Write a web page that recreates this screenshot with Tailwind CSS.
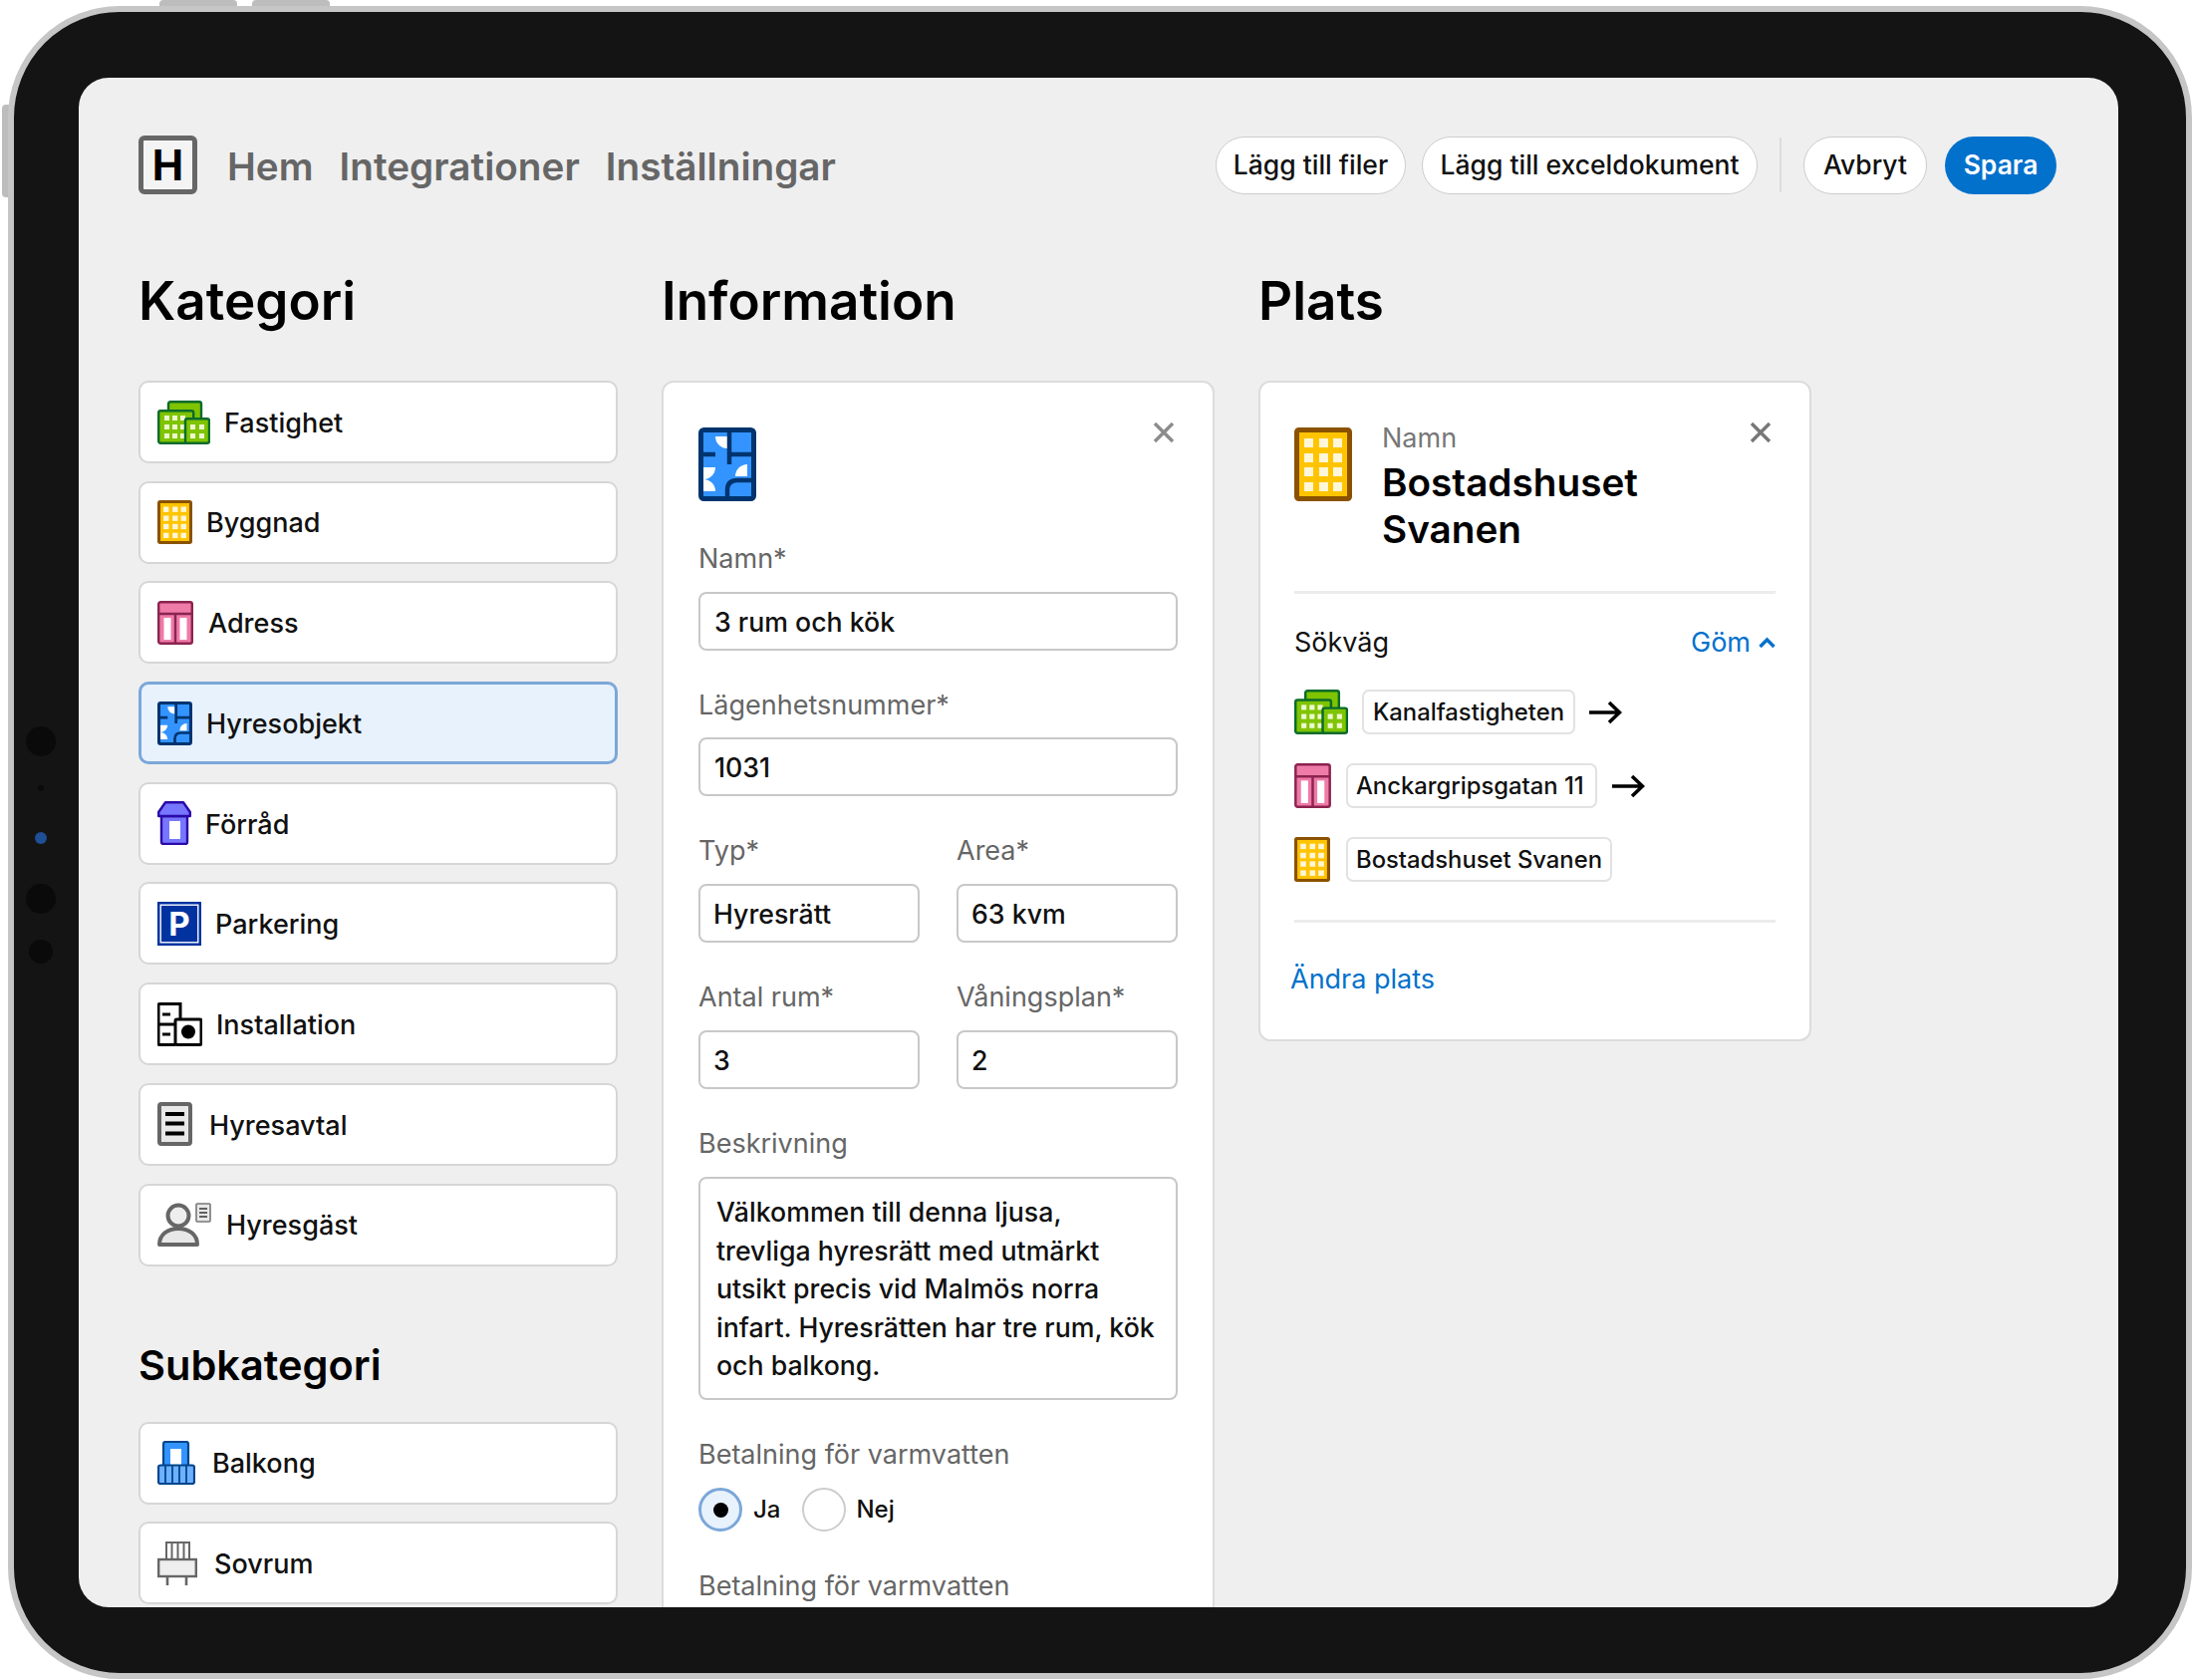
<!DOCTYPE html>
<html lang="sv">
<head>
    <meta charset="UTF-8" />
    <title>Hyresobjekt</title>
    <script src="https://cdn.jsdelivr.net/npm/@tailwindcss/browser@4"></script>
</head>
<body class="bg-white font-['Inter',sans-serif] text-[#111]">
    <!-- ikoner -->
    <svg class="hidden">
        <symbol id="i-fastighet" viewBox="0 0 53 44">
            <rect x="11" y="1.2" width="33" height="30" rx="2" fill="#7fc400" stroke="#0b6b2c" stroke-width="2.4"/>
            <rect x="1.2" y="10.2" width="35" height="32.6" rx="2" fill="#7fc400" stroke="#0b6b2c" stroke-width="2.4"/>
            <g fill="#eef8d0">
                <rect x="7" y="15" width="5" height="5"/><rect x="15" y="15" width="5" height="5"/><rect x="23" y="15" width="5" height="5"/>
                <rect x="7" y="24" width="5" height="5"/><rect x="15" y="24" width="5" height="5"/><rect x="23" y="24" width="5" height="5"/>
                <rect x="7" y="33" width="5" height="5"/><rect x="15" y="33" width="5" height="5"/><rect x="23" y="33" width="5" height="5"/>
            </g>
            <rect x="28" y="18.2" width="24" height="24.6" rx="2" fill="#7fc400" stroke="#0b6b2c" stroke-width="2.4"/>
            <g fill="#eef8d0">
                <rect x="33" y="24" width="5" height="5"/><rect x="42" y="24" width="5" height="5"/>
                <rect x="33" y="33" width="5" height="5"/><rect x="42" y="33" width="5" height="5"/>
            </g>
        </symbol>
        <symbol id="i-byggnad" viewBox="0 0 58 74" preserveAspectRatio="none">
            <rect x="2.5" y="2.5" width="53" height="69" rx="2" fill="#ffc400" stroke="#8a5200" stroke-width="5"/>
            <g fill="#fff6d8">
                <rect x="10" y="11" width="9" height="9"/><rect x="25" y="11" width="9" height="9"/><rect x="39" y="11" width="9" height="9"/>
                <rect x="10" y="26" width="9" height="9"/><rect x="25" y="26" width="9" height="9"/><rect x="39" y="26" width="9" height="9"/>
                <rect x="10" y="40" width="9" height="9"/><rect x="25" y="40" width="9" height="9"/><rect x="39" y="40" width="9" height="9"/>
                <rect x="10" y="55" width="9" height="9"/><rect x="25" y="55" width="9" height="9"/><rect x="39" y="55" width="9" height="9"/>
            </g>
        </symbol>
        <symbol id="i-adress" viewBox="0 0 36 44">
            <rect x="1.2" y="1.2" width="33.6" height="41.6" rx="2" fill="#ee7ba8" stroke="#8c2350" stroke-width="2.4"/>
            <path d="M1 13h34M18 13v30" stroke="#8c2350" stroke-width="2.4"/>
            <rect x="6.5" y="17" width="7" height="22" fill="#fff"/>
            <rect x="22.5" y="17" width="7" height="22" fill="#fff"/>
        </symbol>
        <symbol id="i-hyresobjekt" viewBox="0 0 58 74" preserveAspectRatio="none">
            <rect x="2.5" y="2.5" width="53" height="69" rx="3" fill="#3494ff" stroke="#00346f" stroke-width="5"/>
            <path d="M17 9H29V21A12 12 0 0 1 17 9Z" fill="#fff"/>
            <path d="M49 37V49H37A12 12 0 0 1 49 37Z" fill="#fff"/>
            <path d="M5 40H17A12 12 0 0 1 5 52Z" fill="#fff"/>
            <path d="M5 52A12 12 0 0 1 17 64H5Z" fill="#fff"/>
            <path d="M31 3V37M31 27H55M3 27H17M55 53H39Q29 53 29 63V72" fill="none" stroke="#00346f" stroke-width="4.5"/>
        </symbol>
    </svg>

    <!-- iPad-ram -->
    <div class="relative mt-[6px] ml-[8px] w-[2192px] h-[1679px]">
        <div class="absolute -top-[6px] left-[152px] w-[78px] h-[8px] rounded-t-sm bg-[#bdbdbd]"></div>
        <div class="absolute -top-[6px] left-[245px] w-[78px] h-[8px] rounded-t-sm bg-[#bdbdbd]"></div>
        <div class="absolute -left-[6px] top-[99px] w-[8px] h-[93px] rounded-l-sm bg-[#bdbdbd]"></div>

        <div class="relative h-full rounded-[112px] border-[6px] border-[#c6c6c6] bg-[#141414] pt-[66px] pl-[65px]">
            <!-- kamera -->
            <div class="absolute left-[12px] top-[717px] w-[30px] h-[30px] rounded-full bg-[#0a0a0a]"></div>
            <div class="absolute left-[24px] top-[776px] w-[6px] h-[6px] rounded-full bg-[#0a0a0a]"></div>
            <div class="absolute left-[21px] top-[823px] w-[12px] h-[12px] rounded-full bg-[#1f4f94]"></div>
            <div class="absolute left-[12px] top-[875px] w-[30px] h-[30px] rounded-full bg-[#0a0a0a]"></div>
            <div class="absolute left-[15px] top-[931px] w-[24px] h-[24px] rounded-full bg-[#0a0a0a]"></div>

            <!-- skärm -->
            <div class="w-[2047px] h-[1535px] rounded-[30px] bg-[#efefef] overflow-hidden pl-[60px] pt-[58px]">
                <!-- toppmeny -->
                <header class="flex items-center h-[59px] w-[1925px]">
                    <div class="flex items-center justify-center w-[59px] h-[59px] rounded-[6px] border-[5px] border-[#666] bg-[#f4f4f4] text-[42px] font-bold text-black">H</div>
                    <nav class="flex items-center gap-[26px] ml-[30px] pt-[3px] text-[38.7px] font-semibold text-[#666]">
                        <span>Hem</span>
                        <span>Integrationer</span>
                        <span>Inställningar</span>
                    </nav>
                    <div class="flex items-center ml-auto text-[26.5px] font-medium">
                        <span class="flex items-center justify-center w-[191px] h-[58px] rounded-full border border-[#ccc] bg-white">Lägg till filer</span>
                        <span class="flex items-center justify-center w-[337px] h-[58px] ml-[16px] rounded-full border border-[#ccc] bg-white">Lägg till exceldokument</span>
                        <span class="w-[2px] h-[55px] ml-[22px] mr-[22px] bg-[#dcdcdc]"></span>
                        <span class="flex items-center justify-center w-[124px] h-[58px] rounded-full border border-[#ccc] bg-white">Avbryt</span>
                        <span class="flex items-center justify-center w-[112px] h-[58px] ml-[18px] rounded-full bg-[#0271cc] text-white font-semibold">Spara</span>
                    </div>
                </header>

                <main class="flex gap-[44px] mt-[75px] items-start">
                    <!-- Kategori -->
                    <section class="w-[481px]">
                        <h2 class="h-[64px] mb-[48px] text-[53px] leading-[64px] font-semibold text-black">Kategori</h2>
                        <div class="flex flex-col gap-[17.7px] text-[27px] font-medium">
                            <div class="flex items-center gap-[14px] h-[83px] px-[17px] pt-[3px] rounded-[10px] border-2 border-[#d6d6d6] bg-white">
                                <svg class="w-[53px] h-[44px] -mt-[3px]"><use href="#i-fastighet"/></svg>
                                <span>Fastighet</span>
                            </div>
                            <div class="flex items-center gap-[14px] h-[83px] px-[17px] pt-[3px] rounded-[10px] border-2 border-[#d6d6d6] bg-white">
                                <svg class="w-[35px] h-[44px] -mt-[3px]"><use href="#i-byggnad"/></svg>
                                <span>Byggnad</span>
                            </div>
                            <div class="flex items-center gap-[15px] h-[83px] px-[17px] pt-[3px] rounded-[10px] border-2 border-[#d6d6d6] bg-white">
                                <svg class="w-[36px] h-[44px] -mt-[3px]"><use href="#i-adress"/></svg>
                                <span>Adress</span>
                            </div>
                            <div class="flex items-center gap-[14px] h-[83px] px-[17px] pt-[3px] rounded-[10px] border-[3px] border-[#7ba7d9] bg-[#e8f2fd]">
                                <svg class="w-[35px] h-[44px] -ml-px -mt-[3px]"><use href="#i-hyresobjekt"/></svg>
                                <span>Hyresobjekt</span>
                            </div>
                            <div class="flex items-center gap-[14px] h-[83px] px-[17px] pt-[3px] rounded-[10px] border-2 border-[#d6d6d6] bg-white">
                                <svg class="w-[34px] h-[44px] -mt-[3px]" viewBox="0 0 34 44">
                                    <path d="M4 15V41a2 2 0 0 0 2 2H28a2 2 0 0 0 2-2V15Z" fill="#7676ff" stroke="#2b0aa8" stroke-width="2.4"/>
                                    <path d="M8 1.2H26L32.8 11V15H1.2V11Z" fill="#7676ff" stroke="#2b0aa8" stroke-width="2.4" stroke-linejoin="round"/>
                                    <rect x="12" y="20" width="11" height="18" fill="#fff"/>
                                </svg>
                                <span>Förråd</span>
                            </div>
                            <div class="flex items-center gap-[14px] h-[83px] px-[17px] pt-[3px] rounded-[10px] border-2 border-[#d6d6d6] bg-white">
                                <svg class="w-[44px] h-[44px] -mt-[3px]" viewBox="0 0 44 44">
                                    <rect width="44" height="44" fill="#0033a0"/>
                                    <rect x="3.2" y="3.2" width="37.6" height="37.6" fill="none" stroke="#fff" stroke-width="1.4"/>
                                    <text x="22" y="34" text-anchor="middle" font-family="Inter, sans-serif" font-weight="700" font-size="33" fill="#fff">P</text>
                                </svg>
                                <span>Parkering</span>
                            </div>
                            <div class="flex items-center gap-[14px] h-[83px] px-[17px] pt-[3px] rounded-[10px] border-2 border-[#d6d6d6] bg-white">
                                <svg class="w-[45px] h-[44px] -mt-[3px]" viewBox="0 0 45 44">
                                    <path d="M2 1.5H23V17M2 1.5a1 1 0 0 0-1 1V41.5a1 1 0 0 0 1 1H18M1 22H18" fill="none" stroke="#000" stroke-width="3"/>
                                    <rect x="18" y="17" width="26" height="25.5" rx="1.5" fill="#fff" stroke="#000" stroke-width="3"/>
                                    <circle cx="31" cy="29.5" r="7" fill="#000"/>
                                    <path d="M5 12H13M5 32H13" stroke="#000" stroke-width="3"/>
                                </svg>
                                <span>Installation</span>
                            </div>
                            <div class="flex items-center gap-[17px] h-[83px] px-[17px] pt-[3px] rounded-[10px] border-2 border-[#d6d6d6] bg-white">
                                <svg class="w-[35px] h-[44px] -mt-[3px]" viewBox="0 0 35 44">
                                    <rect x="2" y="2" width="31" height="40" rx="2" fill="#e8e8e8" stroke="#666" stroke-width="4"/>
                                    <path d="M8 12H27M8 21.5H27M8 31.5H27" stroke="#000" stroke-width="4"/>
                                </svg>
                                <span>Hyresavtal</span>
                            </div>
                            <div class="flex items-center gap-[15px] h-[83px] px-[17px] pt-[3px] rounded-[10px] border-2 border-[#d6d6d6] bg-white">
                                <svg class="w-[54px] h-[44px] -mt-[3px]" viewBox="0 0 54 44">
                                    <path d="M2 42C2 32 10 26 21 26S40 32 40 42Z" fill="#e8e8e8" stroke="#666" stroke-width="4" stroke-linejoin="round"/>
                                    <circle cx="21" cy="13" r="10.5" fill="#eee" stroke="#666" stroke-width="4"/>
                                    <rect x="39" y="1" width="14" height="18" rx="1" fill="#e8e8e8" stroke="#777" stroke-width="1.6"/>
                                    <path d="M42 6H50M42 10H50M42 14H50" stroke="#333" stroke-width="1.6"/>
                                </svg>
                                <span>Hyresgäst</span>
                            </div>
                        </div>

                        <h3 class="h-[52px] mt-[73px] mb-[31px] text-[41.5px] leading-[52px] font-semibold text-black">Subkategori</h3>
                        <div class="flex flex-col gap-[17.7px] text-[27px] font-medium">
                            <div class="flex items-center gap-[17px] h-[83px] px-[17px] pt-[3px] rounded-[10px] border-2 border-[#d6d6d6] bg-white">
                                <svg class="w-[38px] h-[44px] -mt-[3px]" viewBox="0 0 38 44">
                                    <rect x="6" y="1" width="25" height="25" rx="2" fill="#3494ff" stroke="#00458a" stroke-width="2.2"/>
                                    <rect x="13" y="8" width="11" height="17" fill="#fff"/>
                                    <rect x="1" y="24.5" width="36" height="18.5" rx="2" fill="#6db0ff" stroke="#00458a" stroke-width="2.2"/>
                                    <path d="M8 25V43M15 25V43M22 25V43M29 25V43" stroke="#00458a" stroke-width="1.8"/>
                                </svg>
                                <span>Balkong</span>
                            </div>
                            <div class="flex items-center gap-[17px] h-[83px] px-[17px] pt-[3px] rounded-[10px] border-2 border-[#d6d6d6] bg-white">
                                <svg class="w-[40px] h-[44px] -mt-[3px]" viewBox="0 0 40 44">
                                    <path d="M9 18V1H32V18M14.5 1V18M20.5 1V18M26.5 1V18" fill="none" stroke="#666" stroke-width="2"/>
                                    <rect x="1.2" y="18" width="37.6" height="17" fill="#eee" stroke="#666" stroke-width="2.4"/>
                                    <path d="M10 35V44M29 35V44" stroke="#666" stroke-width="2.6"/>
                                </svg>
                                <span>Sovrum</span>
                            </div>
                        </div>
                    </section>

                    <!-- Information -->
                    <section class="w-[555px]">
                        <h2 class="h-[64px] mb-[48px] text-[53px] leading-[64px] font-semibold text-black">Information</h2>
                        <div class="relative h-[1400px] rounded-[12px] border-2 border-[#dcdcdc] bg-white px-[35px] pt-[45px] text-[27px]">
                            <svg class="absolute top-[39px] right-[38px] w-[22px] h-[22px]" viewBox="0 0 22 22"><path d="M2 2L20 20M20 2L2 20" stroke="#8c8c8c" stroke-width="3.4"/></svg>
                            <svg class="w-[58px] h-[74px] mb-[42px]"><use href="#i-hyresobjekt"/></svg>

                            <div class="h-[32px] mb-[17px] leading-[32px] text-[#666]">Namn*</div>
                            <div class="flex items-center h-[59px] mb-[39px] px-[14px] pt-[2px] rounded-[8px] border-2 border-[#c8c8c8] text-[26.7px] font-medium">3 rum och kök</div>

                            <div class="h-[32px] mb-[16px] leading-[32px] text-[#666]">Lägenhetsnummer*</div>
                            <div class="flex items-center h-[59px] mb-[39px] px-[14px] pt-[2px] rounded-[8px] border-2 border-[#c8c8c8] text-[26.7px] font-medium">1031</div>

                            <div class="grid grid-cols-[222px_222px] gap-x-[37px] gap-y-[39px]">
                                <div>
                                    <div class="h-[32px] mb-[17px] leading-[32px] text-[#666]">Typ*</div>
                                    <div class="flex items-center h-[59px] px-[13px] pt-[2px] rounded-[8px] border-2 border-[#c8c8c8] text-[26.7px] font-medium">Hyresrätt</div>
                                </div>
                                <div>
                                    <div class="h-[32px] mb-[17px] leading-[32px] text-[#666]">Area*</div>
                                    <div class="flex items-center h-[59px] px-[13px] pt-[2px] rounded-[8px] border-2 border-[#c8c8c8] text-[26.7px] font-medium">63 kvm</div>
                                </div>
                                <div>
                                    <div class="h-[32px] mb-[17px] leading-[32px] text-[#666]">Antal rum*</div>
                                    <div class="flex items-center h-[59px] px-[13px] pt-[2px] rounded-[8px] border-2 border-[#c8c8c8] text-[26.7px] font-medium">3</div>
                                </div>
                                <div>
                                    <div class="h-[32px] mb-[17px] leading-[32px] text-[#666]">Våningsplan*</div>
                                    <div class="flex items-center h-[59px] px-[13px] pt-[2px] rounded-[8px] border-2 border-[#c8c8c8] text-[26.7px] font-medium">2</div>
                                </div>
                            </div>

                            <div class="h-[32px] mt-[39px] mb-[17px] leading-[32px] text-[#666]">Beskrivning</div>
                            <div class="h-[224px] mb-[39px] pl-[16px] pr-[10px] pt-[14px] rounded-[8px] border-2 border-[#c8c8c8] text-[26.7px] leading-[38.5px] font-medium">Välkommen till denna ljusa,<br>trevliga hyresrätt med utmärkt<br>utsikt precis vid Malmös norra<br>infart. Hyresrätten har tre rum, kök<br>och balkong.</div>

                            <div class="h-[32px] mb-[17px] leading-[32px] text-[#666]">Betalning för varmvatten</div>
                            <div class="flex items-center h-[44px] mb-[39px] text-[24px] font-medium">
                                <span class="flex items-center justify-center w-[44px] h-[44px] rounded-full border-[3px] border-[#7ba7d9] bg-[#e8f2fd]"><span class="w-[15px] h-[15px] rounded-full bg-black"></span></span>
                                <span class="ml-[11px]">Ja</span>
                                <span class="w-[44px] h-[44px] ml-[22px] rounded-full border-2 border-[#ccc]"></span>
                                <span class="ml-[10px]">Nej</span>
                            </div>
                            <div class="h-[32px] leading-[32px] text-[#666]">Betalning för varmvatten</div>
                        </div>
                    </section>

                    <!-- Plats -->
                    <section class="w-[555px]">
                        <h2 class="h-[64px] mb-[48px] text-[53px] leading-[64px] font-semibold text-black">Plats</h2>
                        <div class="relative rounded-[12px] border-2 border-[#dcdcdc] bg-white px-[34px] pt-[45px] pb-[43px]">
                            <svg class="absolute top-[39px] right-[38px] w-[22px] h-[22px]" viewBox="0 0 22 22"><path d="M2 2L20 20M20 2L2 20" stroke="#777" stroke-width="3.4"/></svg>
                            <div class="flex gap-[30px] h-[167px] border-b-[3px] border-[#ececec]">
                                <svg class="w-[58px] h-[74px] shrink-0"><use href="#i-byggnad"/></svg>
                                <div>
                                    <div class="h-[32px] -mt-[5px] text-[27px] leading-[32px] text-[#777]">Namn</div>
                                    <div class="mt-[5px] text-[38.7px] leading-[47px] font-semibold text-black">Bostadshuset<br>Svanen</div>
                                </div>
                            </div>
                            <div class="flex items-center justify-between h-[32px] mt-[33px] text-[27px]">
                                <span>Sökväg</span>
                                <span class="flex items-center gap-[8px] text-[#0271cc]">Göm
                                    <svg class="w-[17px] h-[12px]" viewBox="0 0 17 12"><path d="M1.5 10L8.5 3L15.5 10" fill="none" stroke="#0271cc" stroke-width="3.4"/></svg>
                                </span>
                            </div>
                            <div class="flex flex-col gap-[29px] mt-[31px] pb-[38px] border-b-[3px] border-[#ececec] text-[23.8px] font-medium">
                                <div class="flex items-center h-[45px]">
                                    <svg class="w-[54px] h-[45px] shrink-0"><use href="#i-fastighet"/></svg>
                                    <span class="flex items-center h-[45px] ml-[14px] px-[9px] rounded-[7px] border-2 border-[#e2e2e2]">Kanalfastigheten</span>
                                    <svg class="w-[33px] h-[24px] ml-[14px]" viewBox="0 0 33 24"><path d="M0 12H30M20 2L30.5 12L20 22" fill="none" stroke="#000" stroke-width="3.6"/></svg>
                                </div>
                                <div class="flex items-center h-[45px]">
                                    <svg class="w-[37px] h-[45px] shrink-0"><use href="#i-adress"/></svg>
                                    <span class="flex items-center h-[45px] ml-[15px] pl-[8px] pr-[11px] rounded-[7px] border-2 border-[#e2e2e2]">Anckargripsgatan 11</span>
                                    <svg class="w-[33px] h-[24px] ml-[15px]" viewBox="0 0 33 24"><path d="M0 12H30M20 2L30.5 12L20 22" fill="none" stroke="#000" stroke-width="3.6"/></svg>
                                </div>
                                <div class="flex items-center h-[45px]">
                                    <svg class="w-[36px] h-[45px] shrink-0"><use href="#i-byggnad"/></svg>
                                    <span class="flex items-center h-[45px] ml-[16px] px-[8px] rounded-[7px] border-2 border-[#e2e2e2]">Bostadshuset Svanen</span>
                                </div>
                            </div>
                            <div class="mt-[40px] -ml-[4px] text-[27px] leading-[34px] text-[#0271cc]">Ändra plats</div>
                        </div>
                    </section>
                </main>
            </div>
        </div>
    </div>
</body>
</html>
